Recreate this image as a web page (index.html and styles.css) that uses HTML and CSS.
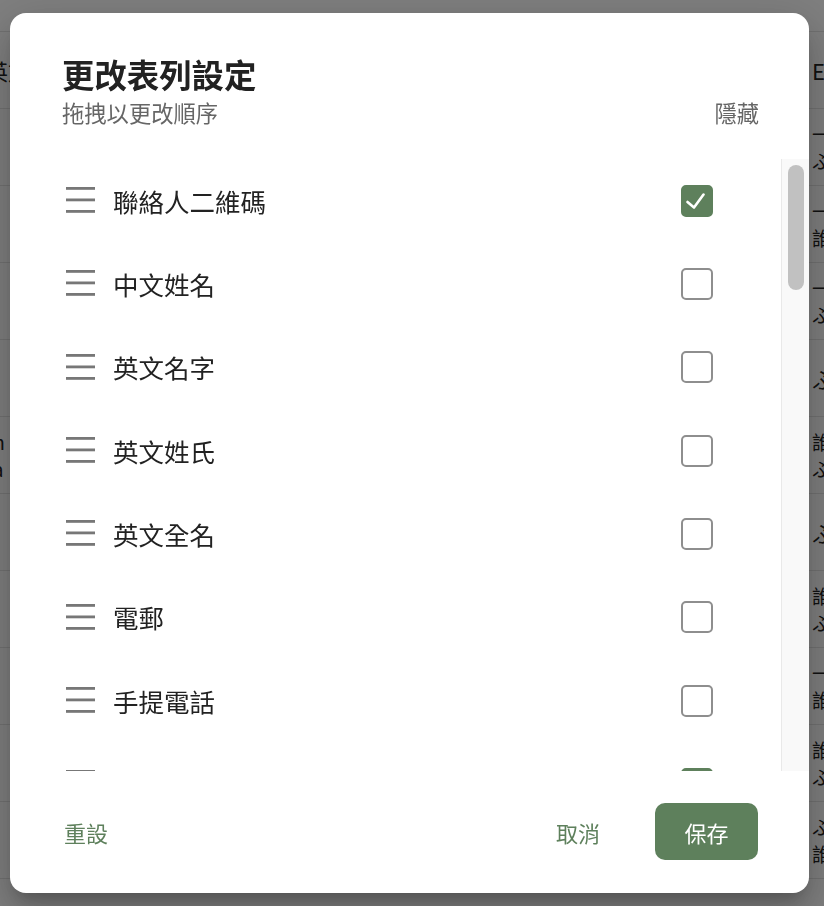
FILE: index.html
```html
<!DOCTYPE html>
<html lang="zh-Hant">
<head>
<meta charset="utf-8">
<title>更改表列設定</title>
<link rel="stylesheet" href="styles.css">
</head>
<body>
<div class="bg">
  <div class="bg-top"></div>
  <div class="bg-row"><span class="bg-left">英文</span><span class="bg-right">E</span></div>
  <div class="bg-row"><span class="bg-left"></span><span class="bg-right two">一<br>ふ</span></div>
  <div class="bg-row"><span class="bg-left"></span><span class="bg-right two">一<br>誰</span></div>
  <div class="bg-row"><span class="bg-left"></span><span class="bg-right two">一<br>ふ</span></div>
  <div class="bg-row"><span class="bg-left"></span><span class="bg-right">ふ</span></div>
  <div class="bg-row"><span class="bg-left two">th<br>ra</span><span class="bg-right two">誰<br>ふ</span></div>
  <div class="bg-row"><span class="bg-left"></span><span class="bg-right">ふ</span></div>
  <div class="bg-row"><span class="bg-left"></span><span class="bg-right two">誰<br>ふ</span></div>
  <div class="bg-row"><span class="bg-left"></span><span class="bg-right two">一<br>誰</span></div>
  <div class="bg-row"><span class="bg-left"></span><span class="bg-right two">誰<br>ふ</span></div>
  <div class="bg-row"><span class="bg-left"></span><span class="bg-right two">ふ<br>誰</span></div>
</div>

<div class="overlay">
  <div class="dialog">
    <div class="header">
      <div class="titles">
        <h1 class="title">更改表列設定</h1>
        <div class="subtitle">拖拽以更改順序</div>
      </div>
      <div class="subtitle">隱藏</div>
    </div>

    <div class="scroll">
      <div class="list">
        <div class="row">
          <svg class="handle" viewBox="0 0 29 27" width="29" height="27"><rect x="0" y="0" width="29" height="2.8" fill="#777"/><rect x="0" y="11.5" width="29" height="2.8" fill="#777"/><rect x="0" y="23" width="29" height="2.8" fill="#777"/></svg>
          <span class="label">聯絡人二維碼</span>
          <span class="box checked"><svg viewBox="0 0 32 32" width="32" height="32"><path d="M6.5 17 L13 22.5 L22.5 9.5" fill="none" stroke="#fff" stroke-width="2.6" stroke-linecap="round" stroke-linejoin="round"/></svg></span>
        </div>
        <div class="row">
          <svg class="handle" viewBox="0 0 29 27" width="29" height="27"><rect x="0" y="0" width="29" height="2.8" fill="#777"/><rect x="0" y="11.5" width="29" height="2.8" fill="#777"/><rect x="0" y="23" width="29" height="2.8" fill="#777"/></svg>
          <span class="label">中文姓名</span>
          <span class="box"></span>
        </div>
        <div class="row">
          <svg class="handle" viewBox="0 0 29 27" width="29" height="27"><rect x="0" y="0" width="29" height="2.8" fill="#777"/><rect x="0" y="11.5" width="29" height="2.8" fill="#777"/><rect x="0" y="23" width="29" height="2.8" fill="#777"/></svg>
          <span class="label">英文名字</span>
          <span class="box"></span>
        </div>
        <div class="row">
          <svg class="handle" viewBox="0 0 29 27" width="29" height="27"><rect x="0" y="0" width="29" height="2.8" fill="#777"/><rect x="0" y="11.5" width="29" height="2.8" fill="#777"/><rect x="0" y="23" width="29" height="2.8" fill="#777"/></svg>
          <span class="label">英文姓氏</span>
          <span class="box"></span>
        </div>
        <div class="row">
          <svg class="handle" viewBox="0 0 29 27" width="29" height="27"><rect x="0" y="0" width="29" height="2.8" fill="#777"/><rect x="0" y="11.5" width="29" height="2.8" fill="#777"/><rect x="0" y="23" width="29" height="2.8" fill="#777"/></svg>
          <span class="label">英文全名</span>
          <span class="box"></span>
        </div>
        <div class="row">
          <svg class="handle" viewBox="0 0 29 27" width="29" height="27"><rect x="0" y="0" width="29" height="2.8" fill="#777"/><rect x="0" y="11.5" width="29" height="2.8" fill="#777"/><rect x="0" y="23" width="29" height="2.8" fill="#777"/></svg>
          <span class="label">電郵</span>
          <span class="box"></span>
        </div>
        <div class="row">
          <svg class="handle" viewBox="0 0 29 27" width="29" height="27"><rect x="0" y="0" width="29" height="2.8" fill="#777"/><rect x="0" y="11.5" width="29" height="2.8" fill="#777"/><rect x="0" y="23" width="29" height="2.8" fill="#777"/></svg>
          <span class="label">手提電話</span>
          <span class="box"></span>
        </div>
        <div class="row">
          <svg class="handle" viewBox="0 0 29 27" width="29" height="27"><rect x="0" y="0" width="29" height="2.8" fill="#777"/><rect x="0" y="11.5" width="29" height="2.8" fill="#777"/><rect x="0" y="23" width="29" height="2.8" fill="#777"/></svg>
          <span class="label">公司名稱</span>
          <span class="box checked"><svg viewBox="0 0 32 32" width="32" height="32"><path d="M6.5 17 L13 22.5 L22.5 9.5" fill="none" stroke="#fff" stroke-width="2.6" stroke-linecap="round" stroke-linejoin="round"/></svg></span>
        </div>
        <div class="row">
          <svg class="handle" viewBox="0 0 29 27" width="29" height="27"><rect x="0" y="0" width="29" height="2.8" fill="#777"/><rect x="0" y="11.5" width="29" height="2.8" fill="#777"/><rect x="0" y="23" width="29" height="2.8" fill="#777"/></svg>
          <span class="label">職位</span>
          <span class="box"></span>
        </div>
      </div>
      <div class="track"><div class="thumb"></div></div>
    </div>

    <div class="footer">
      <span class="reset">重設</span>
      <span class="cancel">取消</span>
      <button class="save" type="button">保存</button>
    </div>
  </div>
</div>
</body>
</html>
```

FILE: styles.css
```css
* { box-sizing: border-box; }

html, body {
  margin: 0;
  padding: 0;
  width: 824px;
  height: 906px;
  overflow: hidden;
  background: #ffffff;
  font-family: "Noto Sans CJK TC", "Noto Sans", "Liberation Sans", sans-serif;
  color: #222222;
}

/* background page (behind the modal) */
.bg {
  width: 824px;
}
.bg-top {
  height: 32px;
  border-bottom: 1px solid #e4e4e4;
}
.bg-row {
  height: 77px;
  border-bottom: 1px solid #e4e4e4;
  display: flex;
  justify-content: space-between;
  align-items: center;
  font-size: 22px;
  line-height: 30px;
  color: #222;
}
.bg-left {
  margin-left: -14px;
}
.bg-right {
  margin-right: -12px;
  width: 24px;
  overflow: hidden;
}
.bg-left.two, .bg-right.two {
  font-size: 19px;
  line-height: 27px;
}

/* modal */
.overlay {
  position: fixed;
  inset: 0;
  background: rgba(0, 0, 0, 0.5);
  display: flex;
  padding: 13px 15px 13px 10px;
}

.dialog {
  flex: 1;
  background: #ffffff;
  border-radius: 16px;
  display: flex;
  flex-direction: column;
  padding-top: 41px;
  overflow: hidden;
  box-shadow: 0 11px 15px -7px rgba(0,0,0,0.2), 0 24px 38px 3px rgba(0,0,0,0.14), 0 9px 46px 8px rgba(0,0,0,0.12);
}

.header {
  display: flex;
  justify-content: space-between;
  align-items: flex-end;
  padding: 0 50px 0 52px;
}

.title {
  margin: 0;
  font-size: 32.4px;
  line-height: 40px;
  font-weight: 700;
  color: #222222;
}

.subtitle {
  margin-top: 3px;
  font-size: 22.3px;
  line-height: 30px;
  color: #666666;
}

.scroll {
  margin-top: 32px;
  height: 612px;
  display: flex;
}

.list {
  flex: 1;
  overflow: hidden;
}

.row {
  height: 83.33px;
  display: flex;
  align-items: center;
  padding: 0 68px 0 56px;
}

.handle {
  flex: none;
  display: block;
}

.label {
  flex: 1;
  margin-left: 18px;
  font-size: 25.5px;
  line-height: 34px;
  color: #222222;
}

.box {
  flex: none;
  width: 32px;
  height: 32px;
  border: 2px solid #8e8e8e;
  border-radius: 5px;
  display: flex;
  align-items: center;
  justify-content: center;
}
.box.checked {
  background: #5e805c;
  border-color: #5e805c;
}
.box svg {
  display: block;
  flex: none;
  margin: -2px;
}

.track {
  flex: none;
  width: 28px;
  background: #f9f9f9;
  border-left: 1px solid #e9e9e9;
  padding: 6px 5px 0 6px;
}
.thumb {
  height: 125px;
  border-radius: 8px;
  background: #c1c1c1;
}

.footer {
  display: flex;
  align-items: center;
  padding: 32px 51px 0 54px;
  font-size: 22px;
  line-height: 30px;
}

.reset {
  flex: 1;
  color: #5e805c;
}

.cancel {
  color: #5e805c;
  margin-right: 55px;
}

.save {
  width: 103px;
  height: 57px;
  border: none;
  border-radius: 10px;
  background: #5e805c;
  color: #ffffff;
  font-family: inherit;
  font-size: 22px;
  line-height: 30px;
  padding: 0;
}
```
